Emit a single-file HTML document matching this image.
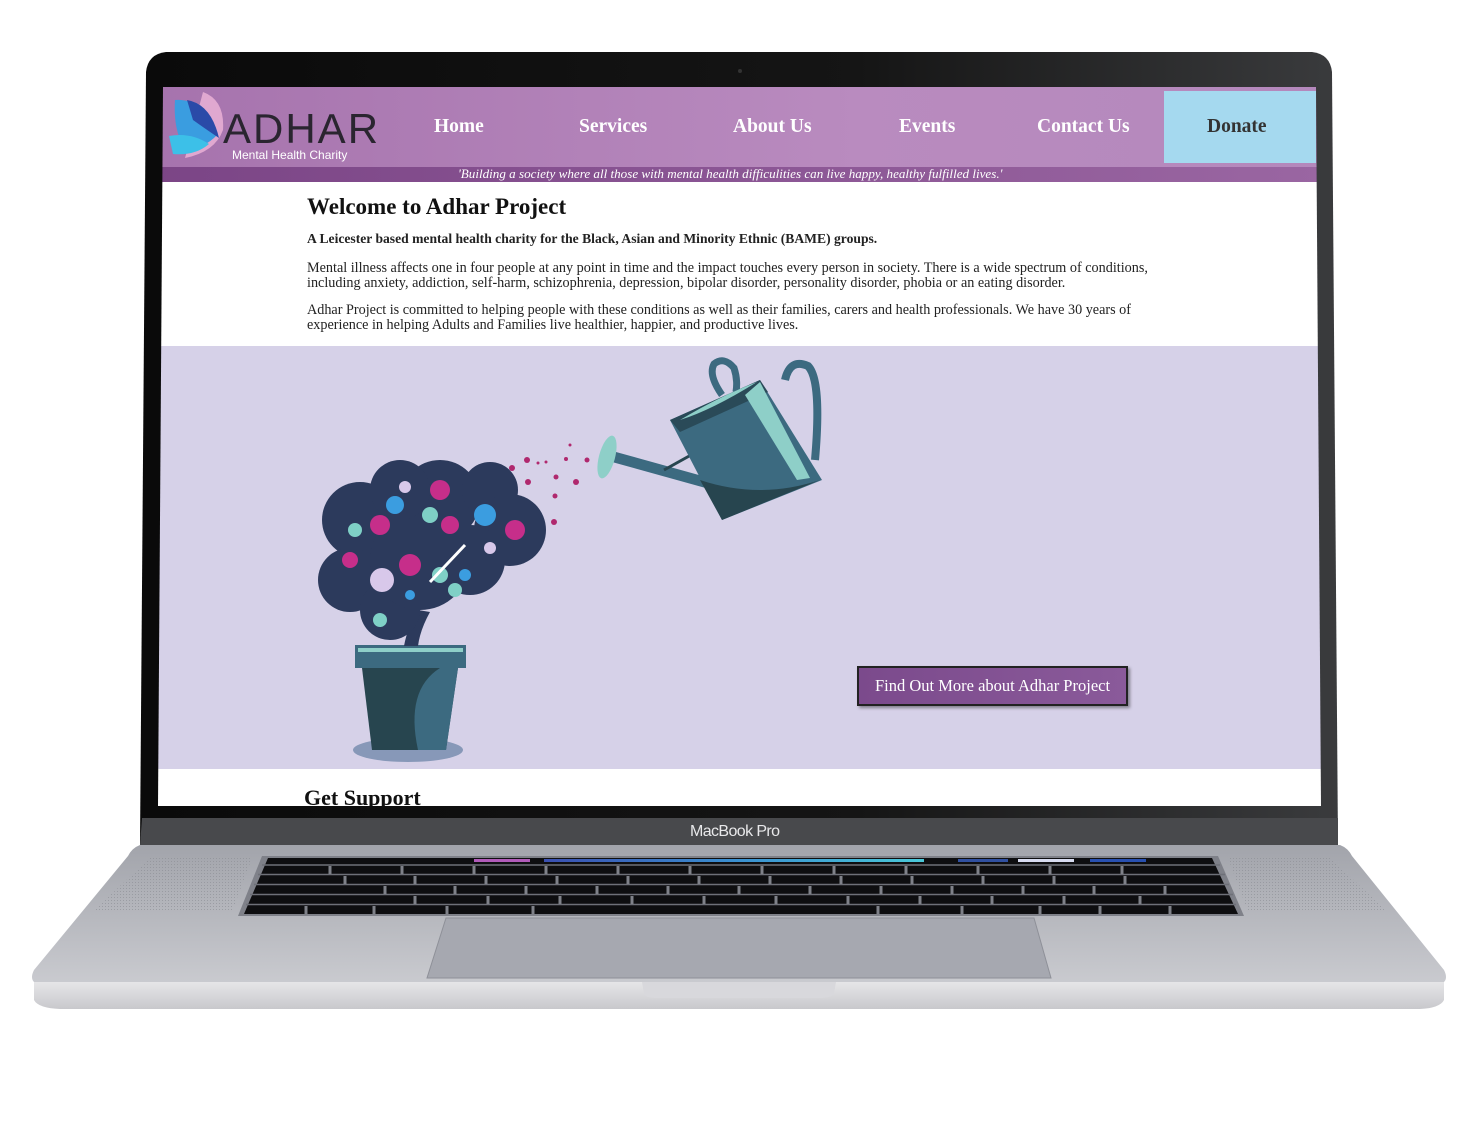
<!DOCTYPE html>
<html><head><meta charset="utf-8"><style>
*{margin:0;padding:0;box-sizing:border-box}
body{width:1482px;height:1123px;background:#fff;position:relative;overflow:hidden;font-family:"Liberation Serif",serif}
.abs{position:absolute}
#screen{position:absolute;left:0;top:0;width:1482px;height:1123px;clip-path:polygon(163px 87px,1316px 87px,1321px 806px,158px 806px)}
.nav{position:absolute;top:116px;color:#fff;font-weight:bold;font-size:19.5px;white-space:nowrap}
.t{position:absolute;left:307px;font-size:14.2px;color:#222;white-space:nowrap}
</style></head><body>
<svg class="abs" style="left:0;top:0" width="1482" height="1123">
<defs>
<linearGradient id="base" x1="0" y1="0" x2="0" y2="1"><stop offset="0" stop-color="#a2a4ab"/><stop offset="1" stop-color="#c9cacf"/></linearGradient>
<linearGradient id="lip" x1="0" y1="0" x2="0" y2="1"><stop offset="0" stop-color="#e6e6e8"/><stop offset="1" stop-color="#c8c8cc"/></linearGradient>
<linearGradient id="bez" x1="0" y1="0" x2="1" y2="0"><stop offset="0" stop-color="#0a0a0a"/><stop offset=".6" stop-color="#151515"/><stop offset="1" stop-color="#3a3b3d"/></linearGradient>
<linearGradient id="tb" x1="0" y1="0" x2="1" y2="0"><stop offset="0" stop-color="#3a4fb0"/><stop offset=".5" stop-color="#3a8fd0"/><stop offset="1" stop-color="#4ac8d8"/></linearGradient>
<pattern id="spk" width="3" height="3" patternUnits="userSpaceOnUse"><rect width="1" height="1" fill="#8a8c93"/></pattern>
</defs>
<path d="M140 845 L1340 845 Q1348 848 1352 856 L1444 970 Q1448 978 1444 982 L34 982 Q30 978 34 970 L128 856 Q132 848 140 845Z" fill="url(#base)"/>
<path d="M34 982 L1444 982 L1444 1000 Q1440 1008 1420 1009 L60 1009 Q38 1008 34 1000Z" fill="url(#lip)"/>
<path d="M642 982 L836 982 L834 994 Q830 998 820 998 L658 998 Q646 998 644 994Z" fill="#d8d8dc"/>
<path d="M150 858 L252 858 L232 912 L92 912Z" fill="url(#spk)" opacity=".6"/>
<path d="M1228 858 L1330 858 L1388 912 L1248 912Z" fill="url(#spk)" opacity=".6"/>
<path d="M262 856 L1218 856 L1244 916 L238 916Z" fill="#7f8189"/>
<path d="M268 858 L1212 858 L1238 914 L244 914Z" fill="#0e0e10"/>
<rect x="474" y="859" width="56" height="3" fill="#b05ab8"/>
<rect x="544" y="859" width="380" height="3" fill="url(#tb)"/>
<rect x="958" y="859" width="50" height="3" fill="#3050a0"/>
<rect x="1018" y="859" width="56" height="3" fill="#d8dcf0"/>
<rect x="1090" y="859" width="56" height="3" fill="#2850b0"/>
<g stroke="#6e7078" stroke-width="1.4">
<line x1="262" y1="865" x2="1220" y2="865"/><line x1="258" y1="874.5" x2="1225" y2="874.5"/><line x1="254" y1="884.5" x2="1229" y2="884.5"/><line x1="250" y1="894.5" x2="1233" y2="894.5"/><line x1="246" y1="904.5" x2="1236" y2="904.5"/>
</g>
<g stroke="#7f8189" stroke-width="3">
<path d="M330 866v8M402 866v8M474 866v8M546 866v8M618 866v8M690 866v8M762 866v8M834 866v8M906 866v8M978 866v8M1050 866v8M1122 866v8"/>
<path d="M345 876v8M415 876v8M486 876v8M557 876v8M628 876v8M699 876v8M770 876v8M841 876v8M912 876v8M983 876v8M1054 876v8M1125 876v8"/>
<path d="M385 886v8M455 886v8M526 886v8M597 886v8M668 886v8M739 886v8M810 886v8M881 886v8M952 886v8M1023 886v8M1094 886v8M1165 886v8"/>
<path d="M415 896v8M488 896v8M560 896v8M632 896v8M704 896v8M776 896v8M848 896v8M920 896v8M992 896v8M1064 896v8M1140 896v8"/>
<path d="M306 906v8M374 906v8M447 906v8M533 906v8M878 906v8M962 906v8M1040 906v8M1100 906v8M1170 906v8"/>
</g>
<path d="M446 918 L1034 918 L1051 978 L427 978Z" fill="#a6a8b0" stroke="#8e9098" stroke-width="1"/>
<path d="M166 52 L1312 52 Q1330 54 1332 72 L1338 845 L140 845 L146 72 Q148 54 166 52Z" fill="url(#bez)"/>
<path d="M142 818 L1338 818 L1338 845 L140 845Z" fill="#48494c"/>
<circle cx="740" cy="71" r="2" fill="#333"/>
</svg>
<div class="abs" style="left:690px;top:823px;color:#e8e8ea;font-family:'Liberation Sans',sans-serif;font-size:16px;letter-spacing:-.6px">MacBook Pro</div>

<div id="screen">
<div class="abs" style="left:150px;top:87px;width:1180px;height:80px;background:linear-gradient(90deg,#a673ad,#b98bbf 60%,#b488bc)"></div>
<div class="abs" style="left:150px;top:167px;width:1180px;height:15px;background:linear-gradient(90deg,#7b4586,#9a66a2)"></div>
<div class="abs" style="left:458px;top:166px;font-size:13.1px;font-style:italic;color:#fff;white-space:nowrap">'Building a society where all those with mental health difficulities can live happy, healthy fulfilled lives.'</div>
<div class="abs" style="left:1164px;top:91px;width:152px;height:72px;background:#a5d9ef"></div>
<div class="nav" style="left:434px">Home</div>
<div class="nav" style="left:579px">Services</div>
<div class="nav" style="left:733px">About Us</div>
<div class="nav" style="left:899px">Events</div>
<div class="nav" style="left:1037px">Contact Us</div>
<div class="nav" style="left:1207px;color:#333">Donate</div>
<svg class="abs" style="left:165px;top:90px" width="80" height="75">
<path d="M38 2 Q60 10 58 40 Q50 62 20 68 Q28 40 38 2Z" fill="#e0a8d0"/>
<path d="M10 10 Q40 8 52 45 Q40 58 20 60 Q8 40 10 10Z" fill="#3a9de0"/>
<path d="M22 10 Q46 14 54 48 Q42 40 28 30Z" fill="#2a4aa8"/>
<path d="M4 46 Q26 42 44 54 Q30 66 8 64Z" fill="#3cc0e8"/>
</svg>
<div class="abs" style="left:223px;top:108px;font-family:'Liberation Sans',sans-serif;font-size:42px;color:#2a2530;letter-spacing:2px;line-height:1">ADHAR</div>
<div class="abs" style="left:232px;top:148px;font-family:'Liberation Sans',sans-serif;font-size:12px;color:#fff">Mental Health Charity</div>

<div class="abs" style="left:150px;top:182px;width:1180px;height:164px;background:#fff"></div>
<div class="abs" style="left:307px;top:194px;font-size:23px;font-weight:bold;color:#111">Welcome to Adhar Project</div>
<div class="t" style="top:231px;font-weight:bold;font-size:13.6px">A Leicester based mental health charity for the Black, Asian and Minority Ethnic (BAME) groups.</div>
<div class="t" style="top:260px">Mental illness affects one in four people at any point in time and the impact touches every person in society. There is a wide spectrum of conditions,</div>
<div class="t" style="top:275px">including anxiety, addiction, self-harm, schizophrenia, depression, bipolar disorder, personality disorder, phobia or an eating disorder.</div>
<div class="t" style="top:302px">Adhar Project is committed to helping people with these conditions as well as their families, carers and health professionals. We have 30 years of</div>
<div class="t" style="top:317px">experience in helping Adults and Families live healthier, happier, and productive lives.</div>

<div class="abs" style="left:150px;top:346px;width:1180px;height:423px;background:#d6d1e8"></div>
<div class="abs" style="left:150px;top:769px;width:1180px;height:40px;background:#fff"></div>
<div class="abs" style="left:304px;top:785px;font-size:22px;font-weight:bold;color:#111">Get Support</div>

<div class="abs" style="left:857px;top:666px;width:271px;height:40px;background:linear-gradient(90deg,#7b4a8c,#8a5a9a);border:2px solid #222;box-shadow:2px 2px 3px rgba(0,0,0,.4);color:#fff;font-size:16.5px;line-height:36px;text-align:center;white-space:nowrap">Find Out More about Adhar Project</div>

<svg class="abs" style="left:0;top:0" width="1482" height="1123">
<ellipse cx="408" cy="750" rx="55" ry="12" fill="#8798b8"/>
<path d="M362 668 L458 668 L446 750 L372 750Z" fill="#27454f"/>
<path d="M440 668 L458 668 L446 750 L418 750 Q405 690 440 668Z" fill="#3c6a80"/>
<rect x="355" y="645" width="111" height="23" fill="#3c6a80"/>
<rect x="358" y="648" width="105" height="4" fill="#8ecfc8"/>
<path d="M404 646 Q408 625 418 610 L430 612 Q420 630 418 646Z" fill="#2c3a5c"/>
<g fill="#2c3a5c">
<circle cx="360" cy="520" r="38"/><circle cx="350" cy="580" r="32"/><circle cx="390" cy="610" r="30"/><circle cx="440" cy="500" r="40"/><circle cx="420" cy="560" r="50"/><circle cx="490" cy="490" r="28"/><circle cx="510" cy="530" r="36"/><circle cx="470" cy="560" r="35"/><circle cx="400" cy="490" r="30"/>
</g>
<g fill="#c62e8a"><circle cx="380" cy="525" r="10"/><circle cx="440" cy="490" r="10"/><circle cx="450" cy="525" r="9"/><circle cx="410" cy="565" r="11"/><circle cx="515" cy="530" r="10"/><circle cx="350" cy="560" r="8"/></g>
<g fill="#7fd0c6"><circle cx="430" cy="515" r="8"/><circle cx="355" cy="530" r="7"/><circle cx="440" cy="575" r="8"/><circle cx="380" cy="620" r="7"/><circle cx="455" cy="590" r="7"/></g>
<g fill="#3b9de0"><circle cx="395" cy="505" r="9"/><circle cx="485" cy="515" r="11"/><circle cx="465" cy="575" r="6"/><circle cx="410" cy="595" r="5"/></g>
<g fill="#d8c8ea"><circle cx="382" cy="580" r="12"/><circle cx="405" cy="487" r="6"/><circle cx="490" cy="548" r="6"/></g>
<path d="M430 582 L465 545" stroke="#fff" stroke-width="3"/>
<g fill="#b0286e"><circle cx="527" cy="460" r="3"/><circle cx="512" cy="468" r="3"/><circle cx="528" cy="482" r="3"/><circle cx="546" cy="462" r="1.5"/><circle cx="566" cy="459" r="2"/><circle cx="556" cy="477" r="2.5"/><circle cx="576" cy="482" r="3"/><circle cx="555" cy="496" r="2.5"/><circle cx="554" cy="522" r="3"/><circle cx="570" cy="445" r="1.5"/><circle cx="587" cy="460" r="2.5"/><circle cx="538" cy="463" r="1.5"/></g>
<path d="M612 462 L720 492 L724 482 L616 452Z" fill="#3c6a80"/>
<path d="M664 470 L700 450" stroke="#27454f" stroke-width="3"/>
<ellipse cx="607" cy="457" rx="8" ry="22" transform="rotate(15 607 457)" fill="#8ecfc8"/>
<path d="M722 395 Q708 375 714 364 Q724 356 734 368 Q738 380 736 392" stroke="#3c6a80" stroke-width="7" fill="none"/>
<path d="M785 380 Q790 358 808 366 Q822 380 815 460" stroke="#3c6a80" stroke-width="8" fill="none"/>
<path d="M670 420 L760 380 L822 480 L722 520Z" fill="#3c6a80"/>
<path d="M670 420 L760 380 L768 392 L680 432Z" fill="#2a4a58"/>
<path d="M680 420 Q720 396 757 382 Q712 410 680 420Z" fill="#8ecfc8"/>
<path d="M745 395 L760 382 L810 478 L797 480Z" fill="#8ecfc8"/>
<path d="M700 480 Q760 500 820 480 L722 520Z" fill="#27454f"/>
</svg>
</div>
</body></html>
